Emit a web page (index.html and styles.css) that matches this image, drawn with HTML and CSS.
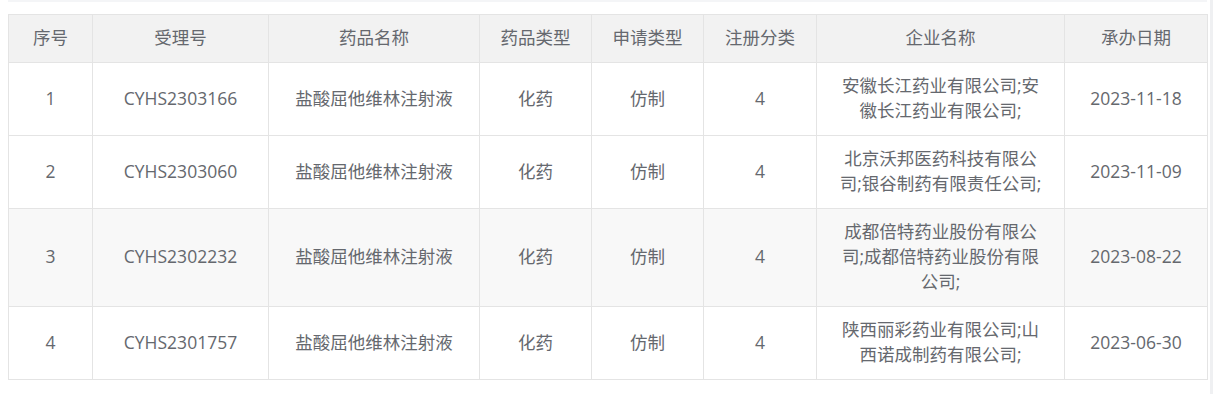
FILE: index.html
```html
<!DOCTYPE html>
<html lang="zh-CN">
<head>
<meta charset="utf-8">
<title>受理信息</title>
<link rel="stylesheet" href="styles.css">
</head>
<body>
<div class="page">
  <div class="main">
    <div class="topbar"></div>
    <table class="grid">
      <colgroup>
        <col class="c-no"><col class="c-acc"><col class="c-name"><col class="c-type"><col class="c-app"><col class="c-reg"><col class="c-corp"><col class="c-date">
      </colgroup>
      <thead>
        <tr><th>序号</th><th>受理号</th><th>药品名称</th><th>药品类型</th><th>申请类型</th><th>注册分类</th><th>企业名称</th><th>承办日期</th></tr>
      </thead>
      <tbody>
        <tr><td>1</td><td>CYHS2303166</td><td>盐酸屈他维林注射液</td><td>化药</td><td>仿制</td><td>4</td><td class="corp">安徽长江药业有限公司;安徽长江药业有限公司;</td><td>2023-11-18</td></tr>
        <tr><td>2</td><td>CYHS2303060</td><td>盐酸屈他维林注射液</td><td>化药</td><td>仿制</td><td>4</td><td class="corp">北京沃邦医药科技有限公司;银谷制药有限责任公司;</td><td>2023-11-09</td></tr>
        <tr class="alt"><td>3</td><td>CYHS2302232</td><td>盐酸屈他维林注射液</td><td>化药</td><td>仿制</td><td>4</td><td class="corp">成都倍特药业股份有限公司;成都倍特药业股份有限公司;</td><td>2023-08-22</td></tr>
        <tr><td>4</td><td>CYHS2301757</td><td>盐酸屈他维林注射液</td><td>化药</td><td>仿制</td><td>4</td><td class="corp">陕西丽彩药业有限公司;山西诺成制药有限公司;</td><td>2023-06-30</td></tr>
      </tbody>
    </table>
  </div>
  <div class="edge"></div>
</div>
</body>
</html>
```
FILE: styles.css
```css
html, body {
  margin: 0;
  padding: 0;
  background: #ffffff;
}
.page {
  display: flex;
  padding-left: 8px;
  height: 394px;
  font-family: "Open Sans", "Noto Sans CJK SC", sans-serif;
  color: #65686e;
}
.main {
  width: 1199px;
  display: flex;
  flex-direction: column;
}
.topbar {
  height: 2px;
  background: #f4f5f7;
  margin-bottom: 12px;
}
.edge {
  width: 3px;
  margin-left: 3px;
  background: #eff0f2;
}
.grid {
  width: 1199px;
  table-layout: fixed;
  border-collapse: collapse;
  font-size: 17.5px;
  line-height: 25px;
}
.c-no { width: 84px; }
.c-acc { width: 176px; }
.c-name { width: 211px; }
.c-type { width: 112px; }
.c-app { width: 112px; }
.c-reg { width: 113px; }
.c-corp { width: 248px; }
.c-date { width: 143px; }
.grid th,
.grid td {
  border: 1px solid #e4e4e4;
  padding: 10px 8px 12px;
  text-align: center;
  font-weight: 400;
  vertical-align: middle;
}
.grid th {
  background: #f2f2f2;
}
.grid td.corp {
  padding-left: 22px;
  padding-right: 22px;
}
.grid tr.alt td {
  background: #f8f8f8;
}
```
